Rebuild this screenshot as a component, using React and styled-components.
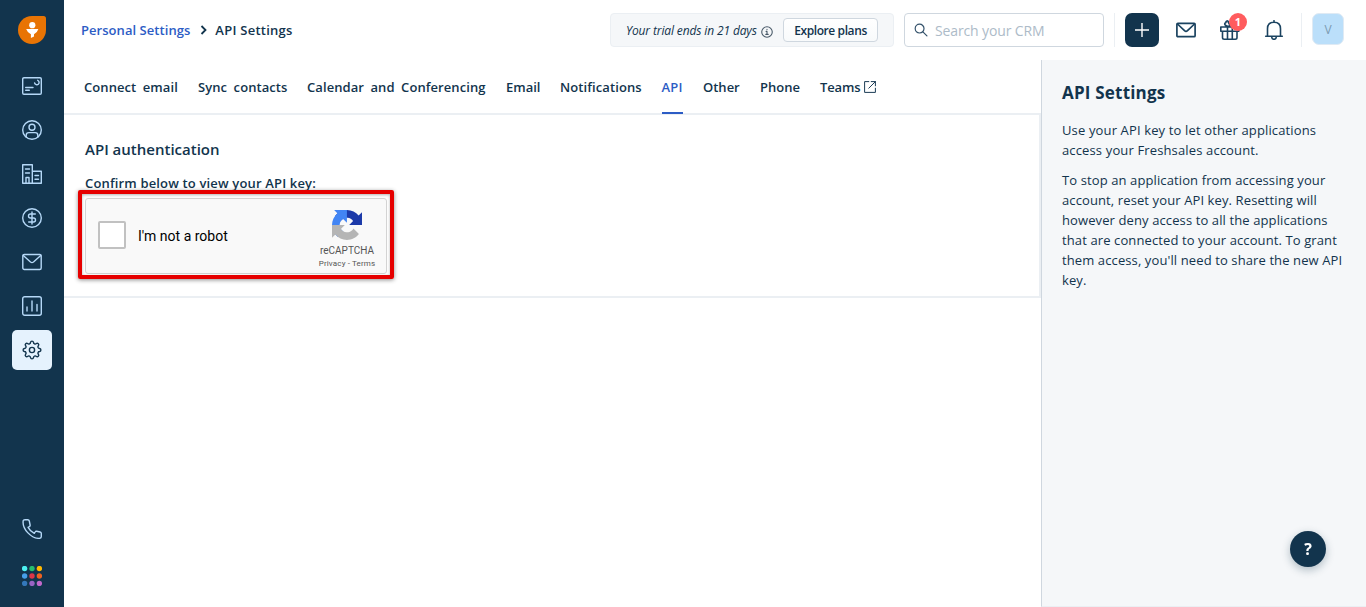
import React from "react";
import styled, { createGlobalStyle } from "styled-components";

const GlobalStyle = createGlobalStyle`
  * {
    box-sizing: border-box;
  }
  body {
    margin: 0;
    background: #fff;
    color: #12344d;
    font-family: "Open Sans", "Noto Sans", sans-serif;
    font-size: 14px;
    overflow: hidden;
  }
  h1, h2, h3, p {
    margin: 0;
  }
  svg {
    display: block;
    flex: none;
  }
`;

const Page = styled.div`
  display: flex;
  height: 100vh;
`;

const Sidebar = styled.nav`
  display: flex;
  flex-direction: column;
  align-items: center;
  gap: 4px;
  width: 64px;
  flex: none;
  padding: 16px 0 11px;
  background: #12344d;
`;

const Brand = styled.div`
  height: 28px;
  margin-bottom: 18px;
`;

const NavItem = styled.a`
  display: flex;
  align-items: center;
  justify-content: center;
  width: 40px;
  height: 40px;
  border-radius: 5px;
  color: ${p => (p.$active ? "#12344d" : "#b5d8f7")};
  background: ${p => (p.$active ? "#e5f2fd" : "transparent")};
`;

const NavBottom = styled.div`
  display: flex;
  flex-direction: column;
  gap: 7px;
  margin-top: auto;
`;

const Column = styled.div`
  display: flex;
  flex-direction: column;
  flex: 1;
  min-width: 0;
`;

const Header = styled.header`
  display: flex;
  align-items: flex-start;
  height: 60px;
  flex: none;
  padding: 13px 22px 0 17px;
`;

const Text = styled.span`
  font-size: ${p => p.$size || 13}px;
  font-weight: ${p => p.$weight || 600};
  letter-spacing: ${p => p.$track || 0}px;
  word-spacing: ${p => p.$words || 0}px;
  color: ${p => p.$color || "inherit"};
  white-space: nowrap;
`;

const Breadcrumb = styled.div`
  display: flex;
  align-items: center;
  height: 34px;
  margin-right: auto;

  svg {
    margin: 0 8px 0 10px;
  }
`;

const Trial = styled.div`
  display: flex;
  align-items: center;
  width: 284px;
  height: 34px;
  padding: 0 15px;
  border: 1px solid #ebeff3;
  border-radius: 4px;
  background: #f5f7f9;
  font-style: italic;

  svg {
    margin: 4px 0 0 4px;
    color: #475867;
  }
`;

const PlansButton = styled.button`
  width: 95px;
  height: 24px;
  margin-left: auto;
  padding: 0;
  border: 1px solid #cfd7df;
  border-radius: 4px;
  background: linear-gradient(#fff, #f8fafb);
  color: #12344d;
  font-family: inherit;
  line-height: 20px;
`;

const Search = styled.div`
  display: flex;
  align-items: center;
  gap: 7px;
  width: 200px;
  height: 34px;
  margin-left: 10px;
  padding-left: 9px;
  border: 1px solid #cfd7df;
  border-radius: 4px;
  color: #33516a;
`;

const Divider = styled.div`
  width: 1px;
  height: 34px;
  background: #ebeff3;
`;

const Actions = styled.div`
  display: flex;
  align-items: center;
  height: 34px;
  margin-left: 10px;
  color: #1b4360;
`;

const AddButton = styled.button`
  display: flex;
  align-items: center;
  justify-content: center;
  width: 34px;
  height: 34px;
  margin: 0 5px 0 10px;
  padding: 0;
  border: 0;
  border-radius: 7px;
  background: #12344d;
`;

const ActionButton = styled.div`
  position: relative;
  display: flex;
  align-items: center;
  justify-content: center;
  width: 44px;
  height: 34px;
`;

const Badge = styled.span`
  position: absolute;
  top: 0;
  right: 5px;
  width: 18px;
  height: 18px;
  border-radius: 50%;
  background: #ff5c5e;
  color: #fff;
  font-size: 11px;
  font-weight: 700;
  line-height: 18px;
  text-align: center;
`;

const UserMenu = styled.div`
  display: flex;
  gap: 10px;
  margin-left: 5px;
`;

const Avatar = styled.div`
  width: 32px;
  height: 32px;
  border: 1px solid #dfeaf4;
  border-radius: 7px;
  background: #bbdffa;
  color: #7c9bb2;
  font-size: 12px;
  line-height: 32px;
  text-align: center;
`;

const Body = styled.div`
  display: flex;
  flex: 1;
`;

const Main = styled.main`
  width: 977px;
`;

const Tabs = styled.div`
  display: flex;
  gap: 20px;
  height: 54px;
  padding-left: 20px;
`;

const Tab = styled.a`
  display: flex;
  align-items: center;
  gap: 4px;
  width: ${p => p.$width}px;
  height: 54px;
  padding-top: 2px;
  border-bottom: 2px solid ${p => (p.$active ? "#2c5cc5" : "transparent")};
  color: ${p => (p.$active ? "#2c5cc5" : "#12344d")};
  z-index: 1;
`;

const Panel = styled.section`
  height: 185px;
  margin-top: -1px;
  padding: 22px 0 0 21px;
  border: solid #ebeff3;
  border-width: 2px 2px 2px 0;
`;

const PanelTitle = styled.h2`
  height: 36px;
  line-height: 20px;
`;

const Confirm = styled.div`
  height: 25px;
  line-height: 20px;
`;

const CaptchaArea = styled.div`
  position: relative;
  width: 302px;
`;

const Highlight = styled.div`
  position: absolute;
  top: -8px;
  left: -7px;
  width: 316px;
  height: 89px;
  border: 4px solid #e60000;
  border-radius: 2px;
  box-shadow: 0 1px 4px rgba(0, 0, 0, 0.45), inset 0 1px 3px rgba(0, 0, 0, 0.3);
`;

const Captcha = styled.div`
  display: flex;
  align-items: center;
  height: 76px;
  padding: 0 9px 0 12px;
  border: 1px solid #d3d3d3;
  border-radius: 3px;
  background: #f9f9f9;
  color: #000;
  font-family: Roboto, "Liberation Sans", sans-serif;
`;

const Checkbox = styled.div`
  width: 28px;
  height: 28px;
  margin: -3px 12px 0 0;
  border: 2px solid #c1c1c1;
  border-radius: 2px;
  background: #fff;
`;

const CaptchaBrand = styled.div`
  display: flex;
  flex-direction: column;
  align-items: center;
  width: 60px;
  height: 58px;
  margin: 3px 0 0 auto;
  padding-top: 1px;
  color: #555;
`;

const CaptchaName = styled.div`
  margin-top: 6px;
  font-size: 10px;
  line-height: 10px;
`;

const CaptchaLinks = styled.div`
  margin-top: 3px;
  font-size: 8px;
  letter-spacing: 0.15px;
  line-height: 10px;
  white-space: nowrap;
`;

const Aside = styled.aside`
  flex: 1;
  padding: 21px 0 0 20px;
  border-left: 1px solid #cfd7df;
  border-bottom: 1px solid #ebeff3;
  background: #f5f7f9;
`;

const AsideTitle = styled.h1`
  height: 39px;
  font-size: 17px;
  line-height: 24px;
`;

const Paragraph = styled.p`
  margin-bottom: 10px;
  line-height: 20px;
`;

const Line = styled(Text)`
  display: block;
`;

const Help = styled.button`
  position: fixed;
  right: 40px;
  bottom: 40px;
  width: 36px;
  height: 36px;
  padding: 0;
  border: 0;
  border-radius: 50%;
  background: #12344d;
  box-shadow: 0 3px 9px rgba(18, 52, 77, 0.3);
  color: #fff;
  font: 700 16px/36px "Open Sans", sans-serif;
`;

const Icon = ({ size = 20, width = 1.4, children }) => (
  <svg
    width={size}
    height={size}
    viewBox="0 0 20 20"
    fill="none"
    stroke="currentColor"
    strokeWidth={width}
    strokeLinecap="round"
    strokeLinejoin="round"
  >
    {children}
  </svg>
);

const Logo = () => (
  <svg width="28" height="28" viewBox="0 0 28 28">
    <path d="M14 0H25.5Q28 0 28 2.5V14A14 14 0 1 1 14 0Z" fill="#e87404" />
    <circle cx="14.3" cy="9.2" r="3.1" fill="#fff" />
    <path d="M8.2 13H20.4Q19.6 16 16 18.2V20.5L12.9 22V18.2Q9 16 8.2 13Z" fill="#fff" />
  </svg>
);

const CardIcon = () => (
  <Icon>
    <path d="M13 1.7H2Q.7 1.7.7 3V17Q.7 18.3 2 18.3H18Q19.3 18.3 19.3 17V3Q19.3 1.7 18 1.7H12M3.7 11.5H11M3.7 14.3H7.3M15.7 4.3A2.3 2.3 0 1 1 12.6 7" />
  </Icon>
);

const ContactIcon = () => (
  <Icon>
    <circle cx="10" cy="10" r="9.3" />
    <circle cx="10" cy="7.2" r="3" />
    <path d="M4.2 17V15.2Q4.2 12.6 6.8 12.6H13.2Q15.8 12.6 15.8 15.2V17" />
  </Icon>
);

const BuildingIcon = () => (
  <Icon>
    <path d="M.7 19.3V.7H10.3V19.3ZM10.3 7.3H19.3V19.3H10.3M3.5 5H7.5M3.5 9H7.5M4 19V13.5H7V19M13 11.5H16.5M13 15.3H16.5" />
  </Icon>
);

const DealIcon = () => (
  <Icon>
    <circle cx="10" cy="10" r="9.3" />
    <path d="M13.3 6H8.5Q6.5 6 6.5 8T8.5 10H11.5Q13.5 10 13.5 12T11.5 14H6.7M10 4V16" />
  </Icon>
);

const MailIcon = () => (
  <Icon>
    <rect x=".8" y="2.5" width="18.4" height="15" rx="1.5" />
    <path d="M1.3 3.5L8.5 10Q10 11.2 11.5 10L18.7 3.5" />
  </Icon>
);

const HeaderMailIcon = () => (
  <Icon width={1.7}>
    <rect x=".9" y="3.4" width="18.2" height="13.3" rx="1" />
    <path d="M1.5 4L8.5 10.7Q10 12 11.5 10.7L18.5 4" />
  </Icon>
);

const ReportIcon = () => (
  <Icon>
    <rect x=".7" y=".7" width="18.6" height="18.6" rx="2" />
    <path d="M5 11V15M10 5V15M15 8.5V15" />
  </Icon>
);

// eight round teeth joined by shallow concave arcs
const gearPath = () => {
  const point = deg => {
    const a = (deg * Math.PI) / 180;
    return `${(10 + 7.8 * Math.cos(a)).toFixed(2)} ${(10 + 7.8 * Math.sin(a)).toFixed(2)}`;
  };
  let d = `M${point(-11)}`;
  for (let i = 0; i < 8; i++) {
    d += `A1.52 1.52 0 0 1 ${point(i * 45 + 11)}A1.65 1.65 0 0 0 ${point(i * 45 + 34)}`;
  }
  return d + "Z";
};

const GearIcon = () => (
  <Icon>
    <path d={gearPath()} />
    <circle cx="10" cy="10" r="2.6" />
  </Icon>
);

const PhoneIcon = () => (
  <Icon>
    <path d="M1.2 1.7Q.3 7.7 5.7 13.6Q11.5 19.8 17.8 19.3Q19.3 19 19.3 17.5V14.5Q19.3 13.3 18 13L14.7 12.3Q13.6 12.1 13.1 13L12.3 14.3Q8 12.3 6.1 8.4L7.5 7.5Q8.3 7 8.1 6L7.3 2Q7 .7 5.7.7H3Q1.4.7 1.2 1.7Z" />
  </Icon>
);

const dots = ["#4cf0f2", "#26bd6e", "#ffb900", "#469fe9", "#dc3648", "#ee6221", "#3478bb", "#9863c5", "#c168cb"];

const AppsIcon = () => (
  <svg width="20" height="20" viewBox="0 0 20 20">
    {dots.map((color, i) => (
      <circle key={color} cx={2.6 + (i % 3) * 7.4} cy={2.6 + Math.floor(i / 3) * 7.4} r="2.7" fill={color} />
    ))}
  </svg>
);

const InfoIcon = () => (
  <Icon size={12} width={1.8}>
    <circle cx="10" cy="10" r="8.8" />
    <path d="M8.5 9H10V14M8 14H12M10 5.5V6" />
  </Icon>
);

const GiftIcon = () => (
  <Icon width={1.6}>
    <path d="M.8 7H18.8V11.3H.8ZM2.5 11.3V17.5Q2.5 19.2 4.2 19.2H15.3Q17 19.2 17 17.5V11.3M7.5 7V19M12.3 7V19M9.8 6.5C4 6.5 3.8 3 6 2.7C5.5.5 8.5.3 8.3 2.3Q9.8 3.5 9.8 6.5C9.8 3.5 11 2 13 2.3C15.5 3 15 6.5 9.8 6.5" />
  </Icon>
);

const BellIcon = () => (
  <Icon width={1.6}>
    <path d="M1.7 16.3H18.3M3.5 16V8.8Q3.5 2.3 10 2.3T16.5 8.8V16M10 .7V2M7.8 17.5Q8.2 19.3 10 19.3T12.2 17.5" />
  </Icon>
);

const RecaptchaLogo = () => (
  <svg width="30" height="30" viewBox="0 0 64 64">
    <path
      fill="#1c3aa9"
      d="M64 31.955l-.033-1.37V4.687l-7.16 7.16C50.948 4.674 42.033.093 32.05.093c-10.4 0-19.622 4.96-25.458 12.64l11.736 11.86a15.55 15.55 0 0 1 4.754-5.334c2.05-1.6 4.952-2.906 8.968-2.906.485 0 .86.057 1.135.163 4.976.393 9.288 3.14 11.828 7.124l-8.307 8.307L64 31.953"
    />
    <path
      fill="#4285f4"
      d="M31.862.094l-1.37.033H4.594l7.16 7.16C4.58 13.147 0 22.06 0 32.046c0 10.4 4.96 19.622 12.64 25.458L24.5 45.768a15.55 15.55 0 0 1-5.334-4.754c-1.6-2.05-2.906-4.952-2.906-8.968 0-.485.057-.86.163-1.135.393-4.976 3.14-9.288 7.124-11.828l8.307 8.307L31.86.095"
    />
    <path
      fill="#b5b5b5"
      d="M.001 32.045l.033 1.37v25.898l7.16-7.16c5.86 7.173 14.774 11.754 24.76 11.754 10.4 0 19.622-4.96 25.458-12.64l-11.736-11.86a15.55 15.55 0 0 1-4.754 5.334c-2.05 1.6-4.952 2.906-8.968 2.906-.485 0-.86-.057-1.135-.163-4.976-.393-9.288-3.14-11.828-7.124l8.307-8.307c-10.522.04-22.4.066-27.295-.005"
    />
  </svg>
);

const navIcons = [CardIcon, ContactIcon, BuildingIcon, DealIcon, MailIcon, ReportIcon, GearIcon];

const tabs = [
  { label: "Connect email", width: 94, words: 3, track: 0.08 },
  { label: "Sync contacts", width: 89, words: 3, track: 0.08 },
  { label: "Calendar and Conferencing", width: 179, words: 3, track: 0.08 },
  { label: "Email", width: 34 },
  { label: "Notifications", width: 81.5, track: 0.1 },
  { label: "API", width: 21.5, track: 0.2, active: true },
  { label: "Other", width: 37 },
  { label: "Phone", width: 40 },
  { label: "Teams", width: 57, track: -0.15, external: true }
];

const intro = ["Use your API key to let other applications", "access your Freshsales account."];

const details = [
  "To stop an application from accessing your",
  "account, reset your API key. Resetting will",
  "however deny access to all the applications",
  "that are connected to your account. To grant",
  "them access, you'll need to share the new API",
  "key."
];

export default function App() {
  return (
    <Page>
      <GlobalStyle />
      <Sidebar>
        <Brand>
          <Logo />
        </Brand>
        {navIcons.map((NavIcon, i) => (
          <NavItem key={i} $active={NavIcon === GearIcon}>
            <NavIcon />
          </NavItem>
        ))}
        <NavBottom>
          <NavItem>
            <PhoneIcon />
          </NavItem>
          <NavItem>
            <AppsIcon />
          </NavItem>
        </NavBottom>
      </Sidebar>

      <Column>
        <Header>
          <Breadcrumb>
            <Text $color="#2c5cc5" $track={0.05}>Personal Settings</Text>
            <svg width="7" height="10" viewBox="0 0 7 10" fill="none" stroke="#12344d" strokeWidth="1.8">
              <path d="M1.5 1L5.5 5L1.5 9" />
            </svg>
            <Text $track={0.25}>API Settings</Text>
          </Breadcrumb>
          <Trial>
            <Text $size={12} $weight={400} $track={-0.13}>Your trial ends in 21 days</Text>
            <InfoIcon />
            <PlansButton>
              <Text $size={12} $track={-0.4}>Explore plans</Text>
            </PlansButton>
          </Trial>
          <Search>
            <Icon size={14} width={1.7}>
              <circle cx="8" cy="8" r="6.3" />
              <path d="M12.7 12.7L18.5 18.5" />
            </Icon>
            <Text $size={14} $weight={400} $track={-0.13} $color="#adbbc8">Search your CRM</Text>
          </Search>
          <Actions>
            <Divider />
            <AddButton>
              <svg width="14" height="14" viewBox="0 0 14 14" stroke="#fff" strokeWidth="1.4">
                <path d="M7 0V14M0 7H14" />
              </svg>
            </AddButton>
            <ActionButton>
              <HeaderMailIcon />
            </ActionButton>
            <ActionButton>
              <GiftIcon />
              <Badge>1</Badge>
            </ActionButton>
            <ActionButton>
              <BellIcon />
            </ActionButton>
          </Actions>
          <UserMenu>
            <Divider />
            <Avatar>V</Avatar>
          </UserMenu>
        </Header>

        <Body>
          <Main>
            <Tabs>
              {tabs.map(tab => (
                <Tab key={tab.label} $width={tab.width} $active={tab.active}>
                  <Text $words={tab.words} $track={tab.track}>{tab.label}</Text>
                  {tab.external && (
                    <Icon size={12} width={1.6}>
                      <path d="M8 1H1V19H19V12M12 1H19V8M19 1L8 12" />
                    </Icon>
                  )}
                </Tab>
              ))}
            </Tabs>
            <Panel>
              <PanelTitle>
                <Text $size={15}>API authentication</Text>
              </PanelTitle>
              <Confirm>
                <Text $track={0.16}>Confirm below to view your API key:</Text>
              </Confirm>
              <CaptchaArea>
                <Captcha>
                  <Checkbox />
                  <Text $size={14} $weight={400}>I'm not a robot</Text>
                  <CaptchaBrand>
                    <RecaptchaLogo />
                    <CaptchaName>reCAPTCHA</CaptchaName>
                    <CaptchaLinks>Privacy - Terms</CaptchaLinks>
                  </CaptchaBrand>
                </Captcha>
                <Highlight />
              </CaptchaArea>
            </Panel>
          </Main>
          <Aside>
            <AsideTitle>
              <Text $size={17} $weight={700} $track={0.2}>API Settings</Text>
            </AsideTitle>
            <Paragraph>
              {intro.map(line => (
                <Line key={line} $weight={400} $track={0.14}>{line}</Line>
              ))}
            </Paragraph>
            <Paragraph>
              {details.map(line => (
                <Line key={line} $weight={400} $track={0.11}>{line}</Line>
              ))}
            </Paragraph>
          </Aside>
        </Body>
      </Column>
      <Help>?</Help>
    </Page>
  );
}
